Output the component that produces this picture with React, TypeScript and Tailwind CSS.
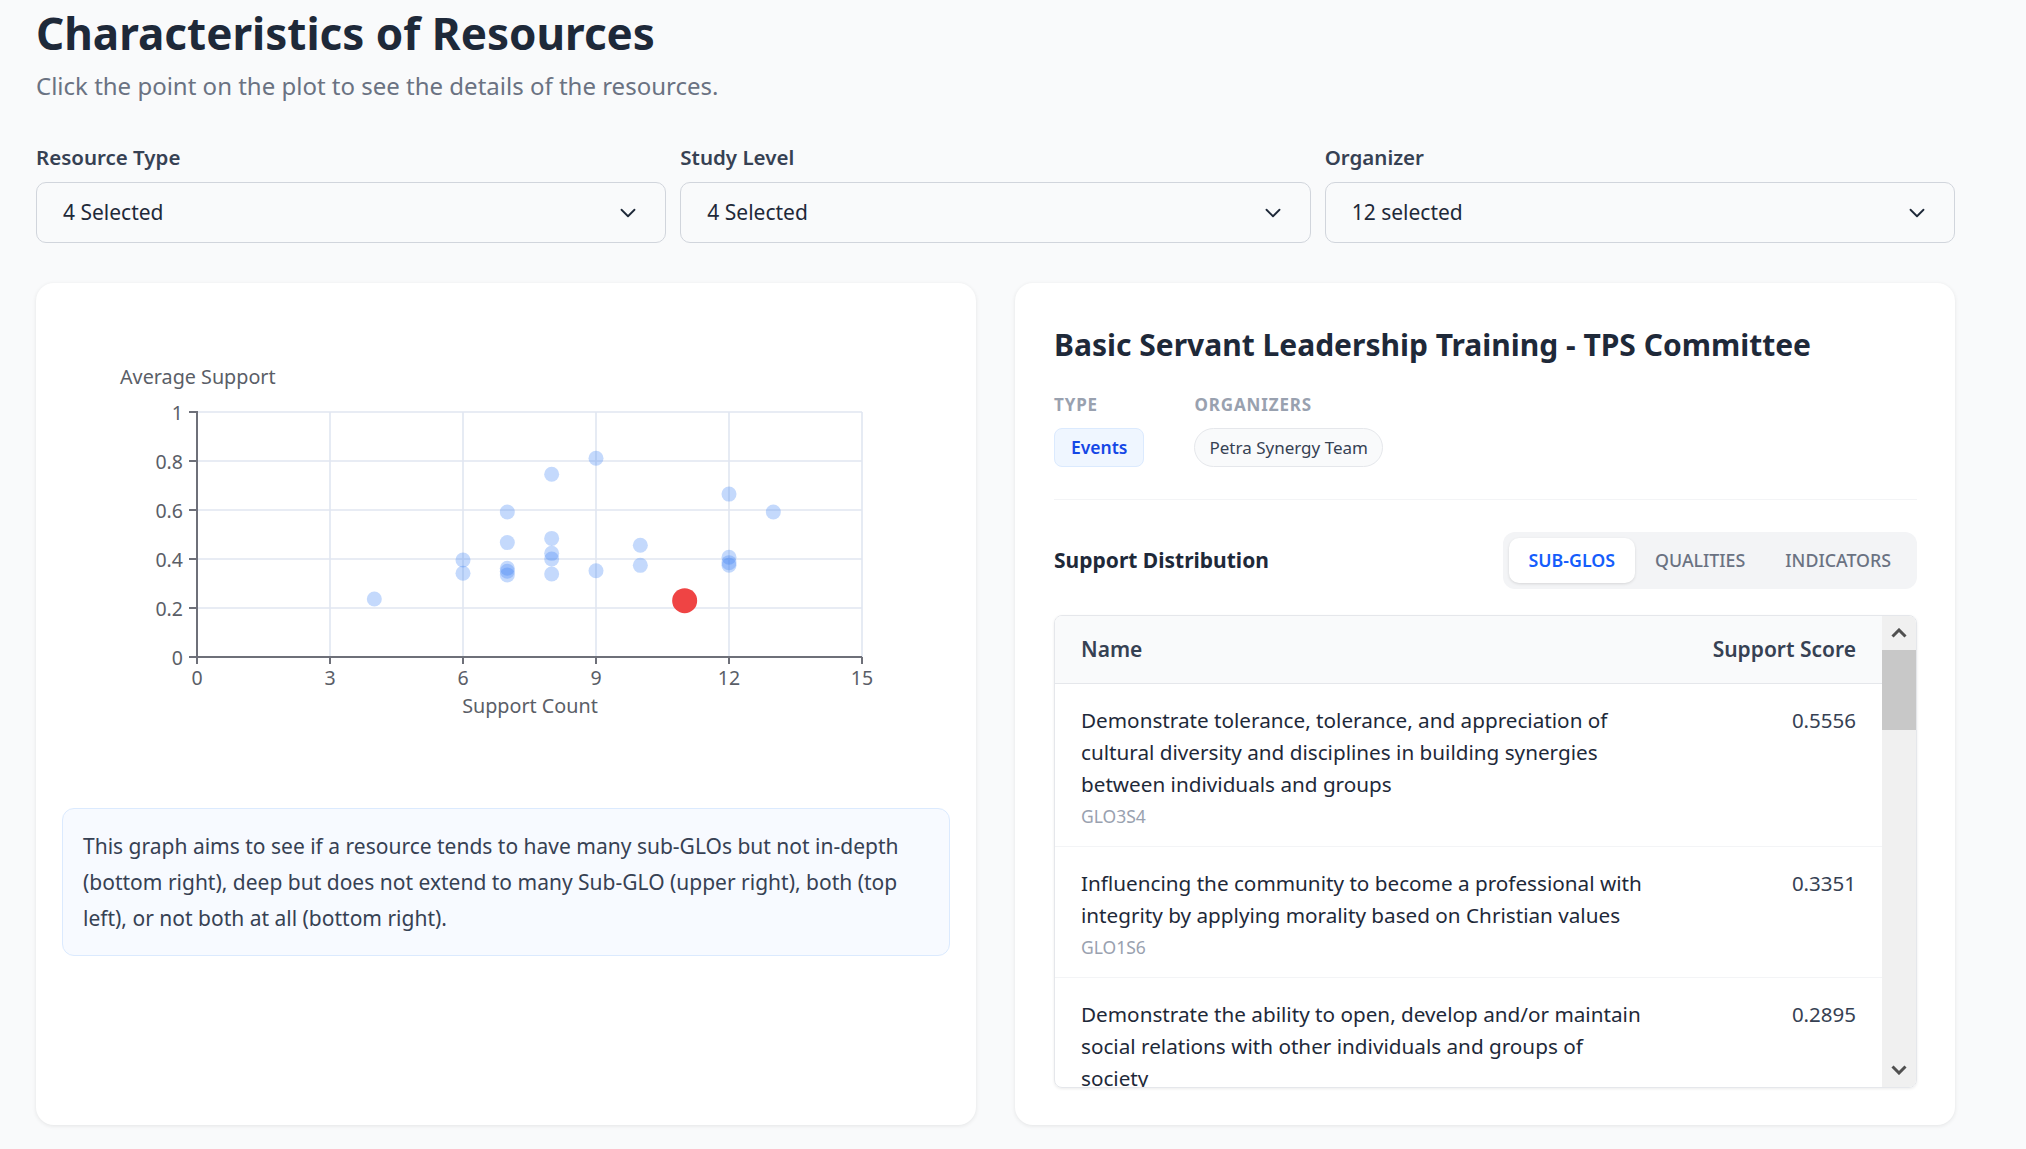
import React from "react";
import { ChevronDown } from "lucide-react";

const pts: [number, number][] = [
  [4, 0.237],
  [6, 0.396],
  [6, 0.342],
  [7, 0.592],
  [7, 0.467],
  [7, 0.362],
  [7, 0.35],
  [7, 0.335],
  [8, 0.746],
  [8, 0.484],
  [8, 0.423],
  [8, 0.4],
  [8, 0.339],
  [9, 0.811],
  [9, 0.352],
  [10, 0.456],
  [10, 0.374],
  [12, 0.665],
  [12, 0.407],
  [12, 0.385],
  [12, 0.375],
  [13, 0.592],
];

function Chart() {
  const X = (v: number) => 135 + (v * 665) / 15;
  const Y = (v: number) => 348 - v * 245;
  const yt = [0, 0.2, 0.4, 0.6, 0.8, 1];
  const xt = [0, 3, 6, 9, 12, 15];
  const axis = "#6E7079";
  const grid = "#E0E6F1";
  const label = "#5a5e67";
  return (
    <svg width="889" height="475" className="block" fontFamily="'Noto Sans', sans-serif">
      {yt
        .filter((v) => v > 0)
        .map((v) => (
          <line key={"h" + v} x1={135} x2={800} y1={Y(v)} y2={Y(v)} stroke={grid} strokeWidth={1.6} />
        ))}
      {xt
        .filter((v) => v > 0)
        .map((v) => (
          <line key={"v" + v} x1={X(v)} x2={X(v)} y1={103} y2={348} stroke={grid} strokeWidth={1.6} />
        ))}
      <line x1={135} x2={135} y1={102} y2={349} stroke={axis} strokeWidth={2} />
      <line x1={134} x2={800} y1={348} y2={348} stroke={axis} strokeWidth={2} />
      {yt.map((v) => (
        <line key={"yt" + v} x1={127} x2={135} y1={Y(v)} y2={Y(v)} stroke={axis} strokeWidth={2} />
      ))}
      {xt.map((v) => (
        <line key={"xt" + v} x1={X(v)} x2={X(v)} y1={348} y2={355} stroke={axis} strokeWidth={2} />
      ))}
      {yt.map((v) => (
        <text key={"yl" + v} x={121} y={Y(v)} textAnchor="end" dominantBaseline="central" fontSize={19.5} fill={label}>
          {v === 0 || v === 1 ? String(v) : v.toFixed(1)}
        </text>
      ))}
      {xt.map((v) => (
        <text key={"xl" + v} x={X(v)} y={368} textAnchor="middle" dominantBaseline="central" fontSize={19.5} fill={label}>
          {v}
        </text>
      ))}
      <text x={58} y={75} fontSize={19.75} fill={label}>
        Average Support
      </text>
      <text x={468} y={396} textAnchor="middle" dominantBaseline="central" fontSize={19.75} fill={label}>
        Support Count
      </text>
      {pts.map(([x, y], i) => (
        <circle key={i} cx={X(x)} cy={Y(y)} r={7.5} fill="#3b82f6" fillOpacity={0.3} />
      ))}
      <circle cx={X(11)} cy={Y(0.23)} r={12.5} fill="#ef4444" />
    </svg>
  );
}

function Filter({ label, value }: { label: string; value: string }) {
  return (
    <div>
      <div className="text-[20.5px] leading-[28px] font-semibold text-gray-700">{label}</div>
      <div className="mt-[11px] h-[61px] rounded-[10px] border-[1.5px] border-gray-300 flex items-center justify-between pl-[26px] pr-[24px]">
        <span className="text-[21px] text-gray-800">{value}</span>
        <ChevronDown size={26} strokeWidth={1.7} className="text-gray-800" />
      </div>
    </div>
  );
}

const rows = [
  {
    name: "Demonstrate tolerance, tolerance, and appreciation of cultural diversity and disciplines in building synergies between individuals and groups",
    code: "GLO3S4",
    score: "0.5556",
  },
  {
    name: "Influencing the community to become a professional with integrity by applying morality based on Christian values",
    code: "GLO1S6",
    score: "0.3351",
  },
  {
    name: "Demonstrate the ability to open, develop and/or maintain social relations with other individuals and groups of society",
    code: "GLO2S3",
    score: "0.2895",
  },
];

function Arrow({ up }: { up?: boolean }) {
  return (
    <svg width="16" height="10" viewBox="0 0 16 10">
      <polyline
        points={up ? "1.5,8.5 8,2 14.5,8.5" : "1.5,1.5 8,8 14.5,1.5"}
        fill="none"
        stroke="#505050"
        strokeWidth={3}
      />
    </svg>
  );
}

export default function App() {
  return (
    <div className="min-h-screen bg-gray-50 font-['Noto_Sans',sans-serif]">
      <div className="pl-[36px] pr-[71px] pt-[9px] pb-[24px]">
        <h1 className="text-[44px] leading-[48px] font-bold text-gray-800">Characteristics of Resources</h1>
        <p className="mt-[14px] text-[24px] leading-[30px] text-gray-500">
          Click the point on the plot to see the details of the resources.
        </p>

        <div className="mt-[42px] grid grid-cols-3 gap-[14px]">
          <Filter label="Resource Type" value="4 Selected" />
          <Filter label="Study Level" value="4 Selected" />
          <Filter label="Organizer" value="12 selected" />
        </div>

        <div className="mt-[40px] grid grid-cols-2 gap-[39px]">
          <div className="h-[842px] rounded-[18px] bg-white shadow-[0_1px_4px_rgba(0,0,0,0.09)] p-[26px]">
            <Chart />
            <div className="mt-[24px] rounded-[12px] border border-blue-100 bg-[#f7faff] px-[20px] py-[19px] text-[21px] leading-[36px] text-gray-700">
              This graph aims to see if a resource tends to have many sub-GLOs but not in-depth (bottom right), deep but
              does not extend to many Sub-GLO (upper right), both (top left), or not both at all (bottom right).
            </div>
          </div>

          <div className="h-[842px] rounded-[18px] bg-white shadow-[0_1px_4px_rgba(0,0,0,0.09)] pl-[39px] pr-[38px] pt-[42px]">
            <h2 className="text-[30px] leading-[40px] font-bold text-gray-800">
              Basic Servant Leadership Training - TPS Committee
            </h2>
            <div className="mt-[30px] flex gap-[50px]">
              <div>
                <div className="text-[17px] leading-[20px] font-bold tracking-wider text-gray-400">TYPE</div>
                <div className="mt-[13px] h-[39px] px-[16px] rounded-[8px] border border-blue-100 bg-blue-50 flex items-center text-[17.5px] font-semibold text-blue-700">
                  Events
                </div>
              </div>
              <div>
                <div className="text-[17px] leading-[20px] font-bold tracking-wider text-gray-400">ORGANIZERS</div>
                <div className="mt-[13px] h-[39px] px-[14px] rounded-full border border-gray-200 bg-gray-50 flex items-center text-[17px] text-gray-700">
                  Petra Synergy Team
                </div>
              </div>
            </div>
            <div className="mt-[32px] border-t border-gray-100" />
            <div className="mt-[32px] flex items-center justify-between">
              <div className="text-[21px] font-bold text-gray-800">Support Distribution</div>
              <div className="h-[57px] rounded-[12px] bg-gray-100 p-[6px] flex">
                <div className="h-[45px] px-[20px] rounded-[10px] bg-white shadow-[0_1px_3px_rgba(0,0,0,0.12)] flex items-center text-[17.8px] font-semibold text-blue-600">
                  SUB-GLOS
                </div>
                <div className="h-[45px] px-[20px] flex items-center text-[17.8px] font-medium text-gray-500">QUALITIES</div>
                <div className="h-[45px] px-[20px] flex items-center text-[17.8px] font-medium text-gray-500">INDICATORS</div>
              </div>
            </div>
            <div className="mt-[26px] h-[473px] rounded-[8px] border border-gray-200 shadow-[0_1px_3px_rgba(0,0,0,0.08)] overflow-hidden flex">
              <div className="flex-1 overflow-hidden">
                <table className="w-full border-collapse">
                  <thead>
                    <tr className="bg-gray-50 border-b border-gray-200">
                      <th className="h-[67px] pl-[26px] pr-[26px] text-left text-[21px] font-semibold text-gray-700">Name</th>
                      <th className="h-[67px] pr-[26px] pl-[26px] text-right text-[21px] font-semibold text-gray-700 whitespace-nowrap">
                        Support Score
                      </th>
                    </tr>
                  </thead>
                  <tbody>
                    {rows.map((r) => (
                      <tr key={r.code} className="border-b border-gray-100 align-top">
                        <td className="pl-[26px] pr-[26px] py-[20px]">
                          <div className="max-w-[572px] text-[20.7px] leading-[32px] text-gray-800">{r.name}</div>
                          <div className="mt-[6px] text-[17.5px] leading-[20px] text-gray-400">{r.code}</div>
                        </td>
                        <td className="pr-[26px] py-[20px] text-right text-[20.5px] leading-[32px] text-gray-700">{r.score}</td>
                      </tr>
                    ))}
                  </tbody>
                </table>
              </div>
              <div className="w-[34px] bg-[#f0f0f0] flex flex-col">
                <div className="h-[34px] flex items-center justify-center">
                  <Arrow up />
                </div>
                <div className="h-[80px] bg-[#c8c8c8]" />
                <div className="flex-1" />
                <div className="h-[34px] flex items-center justify-center">
                  <Arrow />
                </div>
              </div>
            </div>
          </div>
        </div>
      </div>
    </div>
  );
}
